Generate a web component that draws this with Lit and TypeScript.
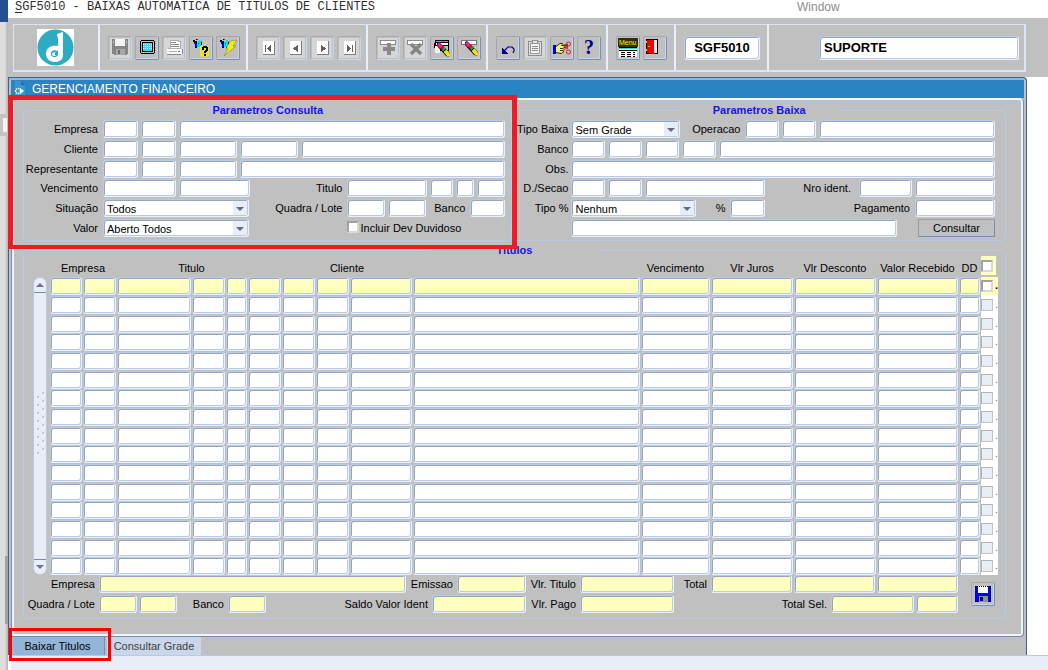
import { LitElement, html, css, svg, nothing } from "lit";
import { customElement } from "lit/decorators.js";

/* Toolbar artwork, each drawn on a 20 x 20 grid. */
const torch = svg`
  <path d="M2 2l2 0 0 1 2 0 0 1 2 0 0 5-4 0 0-3-1 0 0-2-1 0z" fill="#0000c8"/>
  <path d="M6 4l3-2 2 2-2 5-3 0z" fill="#00e0f0"/>
  <path d="M2 2h2v1h-2zM4 4h2v1h-2zM5 1h1v1h-1zM8 9h2v1h-2zM4 9h2v1h-2zM10 4h1v3h-1z" fill="#000"/>
  <path d="M6 1h1v1h-1zM7 5h1v1h-1z" fill="#e01010"/>`;
const pencil = (x: number, y: number) => svg`
  <g transform="translate(${x} ${y})" shape-rendering="auto">
    <path d="M0 1L2 0 13 11 13 15 9 14 0 4z" fill="#000"/>
    <path d="M.5 1.500L2.500 .5 6 4 3.500 6.500 .5 4z" fill="#f0208c"/>
    <path d="M3.500 6L6 4 8.500 6.500 6 9z" fill="#e01010"/>
    <path d="M5.500 8.500L8.500 6" stroke="#00b030" stroke-width="2"/>
    <path d="M6.500 10L9.500 7.500 13 11.500 13 15 10 14z" fill="#f0e020"/>
  </g>`;
const navBox = svg`
  <rect x="5" y="3" width="12" height="14" fill="#fff"/>
  <path d="M5 16.500h12M16.500 3v14" stroke="#808080"/>`;

const icons: Record<string, unknown> = {
  save: svg`
    <path d="M2 1h16v15h-1v1H4v-1H2z" fill="#868686"/>
    <path d="M5 1h10v7H5z" fill="#f4f4f4"/>
    <path d="M3 3h1v2H3zM16 3h1v2h-1z" fill="#c0c0c0"/>
    <path d="M6 11h9v6H6z" fill="#a8a8a8"/><path d="M8 12h2v4H8z" fill="#6c6c6c"/>`,
  screen: svg`
    <path d="M4 2h13v1h1v12h-1v1H4v-1H3V3h1z" fill="#000"/>
    <path d="M4 3h13v12H4z" fill="#c0c0c0"/><path d="M5 4h11v10H5z" fill="#000"/>
    <path d="M6 5h9v8H6z" fill="#20e8e8"/>
    <path d="M6 6.500h9M6 8.500h9M6 10.500h9" stroke="#b8ffff" stroke-dasharray="1 1"/>`,
  print: svg`
    <path d="M6 2h8v1h2v7H6z" fill="#fff" stroke="#b0b0b0" stroke-width="1"/>
    <path d="M7 4.500h5M7 6.500h8M7 8.500h8" stroke="#8a8a8a"/>
    <path d="M3 11h15v5H3z" fill="#fafafa"/>
    <path d="M3 16.500h14M18 11v5" stroke="#888"/><path d="M5 13.500h8M4 10.500h13" stroke="#b0b0b0"/>
    <path d="M14 13h2v1h-2z" fill="#777"/>`,
  query: svg`${torch}
    <path d="M9 8h9v11H9z" fill="#f0e820"/>
    <path d="M8 9.500h11M8 12.500h11M8 15.500h11M9 18.500h9" stroke="#c8c080" stroke-dasharray="1 1"/>
    <path d="M11 9h1V8h4v1h1v4h-1v1h-1v1h-2v-2h1v-1h1v-2h-2v2h-2zM13 16h2v2h-2z" fill="#000"/>`,
  run: svg`${torch}
    <path d="M12 3L19 2 15 8H18L6 18 10 11H8z" fill="#f8f000" stroke="#606000" stroke-width=".4" shape-rendering="auto"/>`,
  first: svg`${navBox}<path d="M7 7h1v7H7zM13 7v7L9 10.500z" fill="#606060"/>`,
  prev: svg`${navBox}<path d="M13 7v7L8 10.500z" fill="#606060"/>`,
  next: svg`${navBox}<path d="M9 7v7l5-3.500z" fill="#606060"/>`,
  last: svg`${navBox}<path d="M8 7v7l4-3.500zM13 7h1v7h-1z" fill="#606060"/>`,
  add: svg`
    <path d="M2.500 2.500h15v4h-15z" fill="#fff" stroke="#8a8a8a"/>
    <path d="M9 5h4v4h4v4h-4v4H9v-4H5V9h4z" fill="#8a8a8a"/>`,
  remove: svg`
    <path d="M2.500 2.500h15v4h-15z" fill="#fff" stroke="#8a8a8a"/>
    <path d="M6 6L16 16M16 6L6 16" stroke="#868686" stroke-width="3.500" shape-rendering="auto"/>`,
  cancelQuery: svg`
    <path d="M3 2h14v11H7v-3H2V5h1z" fill="#000"/>
    <path d="M4 3h12v1H4z" fill="#30c8c8"/><path d="M4 5h12v2H4z" fill="#fff"/>
    <path d="M3 8h5v7H3z" fill="#f4f4f4"/><path d="M9 8h7v4H9z" fill="#c0c0c0"/>${pencil(5, 4)}`,
  clear: svg`<path d="M2.500 2.500h15v4h-15z" fill="#fff" stroke="#777"/>${pencil(6, 3)}`,
  undo: svg`
    <path d="M6 13L10 9H14L16 11V13L15 15" fill="none" stroke="#000088" stroke-width="1.200" shape-rendering="auto"/>
    <path d="M4 10v6h6z" fill="#000088"/>`,
  paste: svg`
    <path d="M3.500 3.500h13v14h-13z" fill="#e0e0e0" stroke="#8c8c8c"/>
    <path d="M5.500 5.500h9v10h-9z" fill="#f4f4f4" stroke="#9a9a9a"/>
    <path d="M7 2h6v4H7z" fill="#909090"/><path d="M8 3h4v2H8z" fill="#e8e8e8"/>
    <path d="M7 8.500h6M7 10.500h6M7 12.500h6" stroke="#8c8c8c"/>`,
  cut: svg`
    <path d="M1 7h3v9H1z" fill="#0000d8"/>
    <path d="M4 8l4-3 3 0-1 2 6-1 0 3-4 1 0 4-3 2-5-1z" fill="#303000" shape-rendering="auto"/>
    <path d="M4 9l4-3 2 0-1 2 5 0 2-1 0 1-5 1 1 1-1 1 1 1-1 1 0 1-2 1-5-1z" fill="#f4f070" shape-rendering="auto"/>
    <path d="M8 10.500h3M8 12.500h3" stroke="#303000"/>
    <path d="M12 12l4-3M12 8l4 3" stroke="#e02020" shape-rendering="auto"/>
    <g fill="none" stroke="#e02020" shape-rendering="auto"><circle cx="16.500" cy="6" r="2"/><circle cx="16.500" cy="14" r="2"/></g>`,
  help: svg`<text x="10" y="16" text-anchor="middle" font-family="Liberation Serif, serif" font-weight="700" font-size="20" fill="#000088">?</text>`,
  menu: svg`
    <path d="M0 0h20v9H0z" fill="#303000"/>
    <text x="1" y="7" font-family="Liberation Sans, sans-serif" font-size="7" fill="#fff000">Menu</text>
    <path d="M1 10h18v9H1z" fill="#fff"/><path d="M1 9.500h18M1 12.500h18" stroke="#000"/><path d="M1 10.500h18" stroke="#30d8d8"/>
    <path d="M3 14.500h14M3 16.500h14M3 18.500h14" stroke="#000" stroke-dasharray="4 2"/>`,
  exit: svg`
    <path d="M1 1h12v15H1z" fill="#000"/><path d="M8 2h4v13H8z" fill="#e8e8e8"/>
    <path d="M2 2h6l1 1v13l-2 0-1-1H2z" fill="#f00000"/><path d="M3 8h2v1H3z" fill="#f8d020"/>
    <path d="M1 3h1v2H1zM1 11h1v2H1z" fill="#f8d020"/>`,
  disk: svg`
    <path d="M2 2h16v16H2z" fill="#0000f0"/><path d="M5 2h10v7H5z" fill="#fff"/>
    <path d="M2 2.500h16M2 17.500h16" stroke="#000" stroke-dasharray="1 1"/>
    <path d="M6 12h9v6H6z" fill="#909090"/><path d="M7 13h3v4H7z" fill="#0000c0"/>
    <path d="M17.500 3v14" stroke="#000060"/>`,
};

const icon = (name: string) =>
  html`<svg class="icon" viewBox="0 0 20 20" shape-rendering="crispEdges" aria-hidden="true">${icons[name]}</svg>`;

type Tool = [icon: string, title: string, disabled?: boolean];
const toolGroups: Tool[][] = [
  [["save", "Salvar", true], ["screen", "Tela"], ["print", "Imprimir", true], ["query", "Entrar consulta"], ["run", "Executar consulta"]],
  [["first", "Primeiro", true], ["prev", "Anterior", true], ["next", "Proximo", true], ["last", "Ultimo", true]],
  [["add", "Inserir", true], ["remove", "Excluir", true], ["cancelQuery", "Cancelar consulta"], ["clear", "Limpar"]],
  [["undo", "Desfazer"], ["paste", "Colar", true], ["cut", "Recortar"], ["help", "Ajuda"]],
  [["menu", "Menu"], ["exit", "Sair"]],
];

const columns = [
  "Empresa", "Nome empresa", "Titulo", "Serie", "Parcela", "Tipo", "Cliente", "Filial", "Codigo",
  "Nome cliente", "Vencimento", "Vlr Juros", "Vlr Desconto", "Valor Recebido", "DD",
];
const rowIndexes = Array.from({ length: 16 }, (_, i) => i);

const field = (name: string, width: string, id?: string) =>
  html`<input class="field ${width}" type="text" id=${id ?? nothing} aria-label=${id ? nothing : name} />`;
const combo = (id: string, width: string, value: string) =>
  html`<span class="combo ${width}"><select class="field" id=${id}><option>${value}</option></select></span>`;

@customElement("app-root")
export class AppRoot extends LitElement {
  static styles = css`
    :host {
      --face: #c0c0c0;
      --edge: #b8cbe4;
      --pale: #e8edf6;
      --steel: #6f8fb5;
      --key: #ffffc0;
      display: grid;
      grid-template-columns: 8px minmax(0, 1fr);
      min-height: 100vh;
      background: #fff;
      color: #000;
      font: 11px/14px "Liberation Sans", Arial, sans-serif;
    }
    * { box-sizing: border-box; }
    input, select, button { font: inherit; color: inherit; margin: 0; }

    .desktop {
      display: flex;
      flex-direction: column;
      background: linear-gradient(to right, #dedede 60%, #b4b4b4);
    }
    .desktop-top { height: 22px; background: #25508f; }
    .desktop-box { height: 22px; margin-top: 92px; border: solid #c4c4c4; border-width: 4px 1px 4px 3px; background: #f4f4f4; }
    .desktop-thumb { height: 68px; width: 3px; margin: 420px 0 0 5px; background: #a2a2a2; }

    .app { display: flex; flex-direction: column; min-width: 0; }
    .menubar {
      display: flex;
      height: 18px;
      align-items: flex-start;
      padding-left: 7px;
      font: 12px/14px "Liberation Mono", "Courier New", monospace;
      color: #303030;
    }
    .menubar u { text-underline-offset: 2px; }
    .menubar-title { flex: 1 1 auto; margin: 0; font: inherit; }
    .menubar-item { width: 251px; color: #8e8e8e; font: 12px/14px "Liberation Sans", Arial, sans-serif; text-decoration: none; }

    .toolband { padding: 6px 22px 5px 5px; background: var(--face); }
    .toolbar { display: flex; height: 48px; border: 2px solid #dbe5f3; border-width: 1px 2px 2px 1px; }
    .group { display: flex; align-items: center; gap: 3px; padding: 0 8px; border: 0 solid; border-right-width: 2px; border-image: linear-gradient(to right, #b8cbe4 50%, #e8f0fb 50%) 1; }
    .group-brand { width: 86px; padding: 0 0 0 23px; }
    .group-5 { width: 148px; }
    .group-4 { width: 120px; }
    .group-2 { width: 68px; }
    .group-code { width: 93px; }
    .group-user { flex: 1; justify-content: flex-end; padding-right: 5px; border: 0; }
    .logo { width: 37px; height: 37px; background: #fff; }
    .tool {
      width: 24px; height: 24px; padding: 1px;
      border: 1px solid;
      border-color: #a4a8ae #7590b4 #7590b4 #a4a8ae;
      border-radius: 2px;
      background: var(--face);
      box-shadow: inset -1px -1px 0 #c6d4e6;
    }
    .tool:disabled { border-color: #a8acb2 #c6d6ec #c6d6ec #a8acb2; box-shadow: none; }
    .tool:disabled .icon { background: #d6d6d6; }
    .icon { display: block; width: 20px; height: 20px; overflow: visible; }
    .field.big { height: 24px; padding: 0 4px; font-size: 13px; font-weight: 700; }
    .code { width: 76px; text-align: center; }
    .user { width: 200px; }

    .frame {
      margin-right: 21px;
      padding: 2px 2px 0;
      border: 1px solid #3f6290;
      border-bottom: 0;
      border-top-right-radius: 4px;
      background: linear-gradient(#8fb6de 2px, var(--face) 2px);
    }
    .titlebar { display: flex; align-items: center; height: 18px; gap: 6px; padding-left: 3px; background: #2b83c3; color: #fff; }
    .titlebar h1 { margin: 0; font: 12px/16px "Liberation Sans", Arial, sans-serif; }
    .doc { width: 12px; height: 16px; }
    .panel {
      padding: 6px 17px 17px 11px;
      border: solid var(--steel);
      border-width: 0 1px 1px;
      border-radius: 0 4px 4px 0;
      box-shadow: inset 0 0 0 2px #f0f3f9;
    }
    .params { display: grid; grid-template-columns: minmax(0, 489fr) minmax(0, 493fr); }
    fieldset { min-width: 0; margin: 0; padding: 0; border: 1px solid var(--edge); border-radius: 5px; }
    legend { margin: 0 auto; padding: 0 32px; line-height: 12px; font-weight: 700; color: #1414f0; }
    .titles { margin-top: 3px; }
    .titles legend { padding: 0 68px; }
    .rows { display: grid; grid-template-rows: 20px 20px 19px 20px 20px 19px; padding: 4px 6px 2px 0; }
    .rows-b { padding-right: 10px; }
    .titles-body { padding: 0 7px 5px 9px; }
    .row { display: flex; gap: 3px; align-items: flex-start; min-width: 0; }
    .row label { flex: none; line-height: 18px; padding-right: 2px; text-align: right; white-space: nowrap; }
    .row .lead { width: 76px; }
    .row .lead-b { width: 55px; padding-right: 0; }
    .row .fill { flex: 1 1 0; }
    .row .l62 { width: 59px; }
    .row .l45 { width: 28px; }
    .row .check-label { padding: 0; }

    .field {
      flex: none;
      min-width: 0;
      height: 18px;
      padding: 0 3px;
      border: 1px solid;
      border-color: var(--edge) #eaf1fb #eaf1fb var(--edge);
      border-radius: 3px;
      background: #fff;
      box-shadow: inset 1px 1px 0 #9aa5b5, inset -1px -1px 0 var(--edge);
      outline: none;
    }
    .grow { flex: 1 1 0; }
    .w18 { width: 18px; } .w23 { width: 23px; } .w28 { width: 28px; } .w34 { width: 34px; }
    .w35 { width: 35px; } .w38 { width: 38px; } .w42 { width: 42px; } .w53 { width: 53px; }
    .w58 { width: 58px; } .w69 { width: 69px; } .w71 { width: 71px; } .w73 { width: 73px; }
    .w80 { width: 80px; } .w81 { width: 81px; } .w83 { width: 83px; } .w94 { width: 94px; } .w109 { width: 109px; }
    .w120 { width: 120px; } .w125 { width: 125px; } .w146 { width: 146px; }
    .cluster { display: flex; gap: 3px; width: 158px; flex: none; }
    .cluster-check { gap: 1px; }
    .gap-wide { width: 15px; flex: none; }

    .combo { position: relative; display: block; flex: none; }
    .combo select { display: block; width: 100%; appearance: none; padding: 2px 16px 0 3px; }
    .combo::before {
      content: ""; position: absolute; inset: 2px 2px 2px auto; width: 14px;
      background: var(--pale); pointer-events: none;
    }
    .combo::after {
      content: ""; position: absolute; right: 5px; top: 8px; pointer-events: none;
      border: 4px solid transparent; border-top-color: #5f6b85; border-bottom: 0;
    }
    .check {
      appearance: none; flex: none; width: 12px; height: 12px;
      border: 2px solid; border-color: #a2a2a2 #d8d8d8 #d8d8d8 #a2a2a2;
      background: #fff;
    }
    .cluster-check .check { margin-top: 2px; }
    .check:disabled { background: var(--pale); border-color: #b4b4b4 #c4c4c4 #c4c4c4 #b4b4b4; border-width: 1px; }
    .command {
      flex: none; width: 77px; height: 18px; padding: 0;
      border: 1px solid; border-color: #9a9a9a var(--steel) var(--steel) #9a9a9a;
      background: var(--face);
    }

    .grid { display: flex; gap: 3px; }
    .scroll {
      display: flex; flex-direction: column; flex: none;
      width: 14px; margin-top: 21px;
      border: 1px solid var(--edge); border-radius: 7px;
      background: var(--pale);
      overflow: hidden;
    }
    .scroll button { height: 15px; padding: 0; border: 0; background: var(--pale); display: grid; place-items: center; }
    .scroll .up { border-bottom: 1px solid var(--steel); }
    .scroll .down { border-top: 1px solid var(--steel); }
    .scroll .arrow { display: block; border: 4px solid transparent; border-bottom-color: #6a7690; border-top: 0; }
    .scroll .down .arrow { border: 4px solid transparent; border-top-color: #6a7690; border-bottom: 0; }
    .track { flex: 1; display: grid; place-items: center; }
    .grip { width: 8px; height: 68px; }

    table { flex: 1; width: 100%; table-layout: fixed; border-collapse: collapse; }
    th, td { padding: 0; vertical-align: top; }
    th { height: 21px; padding: 5px 1px 0 0; font-weight: 400; line-height: 14px; white-space: nowrap; }
    th.shift { padding-right: 16px; }
    td { height: 19px; padding-right: 1px; }
    tr:nth-child(3n) td, tbody tr:last-child td { height: 18px; }
    td .field { display: block; width: 100%; height: 18px; }
    .current .field { background: var(--key); }
    .c22 { width: 22px; } .c33 { width: 33px; } .c34 { width: 34px; } .c63 { width: 63px; }
    .c70 { width: 70px; } .c75 { width: 75px; } .c82 { width: 82px; } .c83 { width: 83px; } .c17 { width: 17px; }
    td.pick, th.pick { padding: 0; background: #fff; }
    .pick div { display: flex; align-items: center; gap: 2px; height: 17px; line-height: 17px; overflow: hidden; color: #707070; }
    th.pick { background: none; }
    th.pick div { width: 15px; height: 19px; background: var(--key); }
    tr.current td.pick { background: linear-gradient(var(--key) 18px, #fff 18px); }
    tr.current .pick div { color: #000; font-weight: 700; }

    .foot { display: grid; grid-template-columns: minmax(0, 1fr) 24px; column-gap: 13px; align-items: center; margin-left: -7px; padding-right: 3px; }
    .foot-rows { display: grid; row-gap: 2px; }
    .foot .row { gap: 2px; }
    .foot .field { background: var(--key); }
    .foot .first { width: 71px; }
    .foot .l50 { width: 50px; }
    .foot .l33 { width: 33px; }
    .foot .l47 { width: 47px; }
    .foot .l153 { width: 153px; }

    .tabs { display: flex; gap: 2px; height: 18px; }
    .tab { width: 94px; padding: 0; border: 0; background: #cad6ea; color: #404040; line-height: 18px; }
    .tab[aria-selected="true"] { background: #93b5d7; color: #000; border-right: 1px solid var(--steel); }
    .status { flex: 1; min-height: 14px; margin-left: 3px; border-top: 1px solid var(--edge); background: var(--pale); }

    .stage { position: relative; }
    .mark { position: absolute; pointer-events: none; }
    .mark-params { left: 0; top: 18px; width: 509px; height: 154px; border: 5px solid #ed1c24; border-bottom-width: 4px; }
    .mark-tab { left: 1px; bottom: -6px; width: 102px; height: 33px; border: 3px solid #ff0000; }
  `;

  private renderToolbar() {
    return html`
      <div class="toolband">
        <div class="toolbar" role="toolbar">
          <div class="group group-brand">
            <svg class="logo" viewBox="0 0 37 37" aria-hidden="true">
              <circle cx="18.5" cy="18.500" r="18" fill="#2cabc1" />
              <path d="M20 5L26 3V26C26 31 22 33 18 33C12 33 9 29 9 25C9 18 15 16 21 17V10C21 8 20 7 20 5Z" fill="#fff" />
              <path d="M21 22C16 20 13 23 14 26C15 29 21 29 21 25Z" fill="#2cabc1" />
              <path d="M15 25C16 22 20 23 19 26C18 28 15 27 15 25Z" fill="#fff" />
              <path d="M18 24h3v2h-3z" fill="#2cabc1" />
            </svg>
          </div>
          ${toolGroups.map(
            (group) => html`<div class="group group-${group.length}">
              ${group.map(
                ([name, title, disabled]) =>
                  html`<button class="tool" type="button" title=${title} aria-label=${title} ?disabled=${disabled}>${icon(name)}</button>`
              )}
            </div>`
          )}
          <div class="group group-code"><input class="field big code" type="text" aria-label="Programa" value="SGF5010" /></div>
          <div class="group group-user"><input class="field big user" type="text" aria-label="Usuario" value="SUPORTE" /></div>
        </div>
      </div>
    `;
  }

  private renderQuery() {
    return html`
      <fieldset>
        <legend>Parametros Consulta</legend>
        <div class="rows">
          <div class="row">
            <label class="lead" for="q-emp">Empresa</label>
            ${field("", "w35", "q-emp")}${field("Filial", "w35")}${field("Nome da empresa", "grow")}
          </div>
          <div class="row">
            <label class="lead" for="q-cli">Cliente</label>
            ${field("", "w35", "q-cli")}${field("Filial cliente", "w35")}${field("Codigo cliente", "w58")}${field("Loja cliente", "w58")}${field("Nome do cliente", "grow")}
          </div>
          <div class="row">
            <label class="lead" for="q-rep">Representante</label>
            ${field("", "w35", "q-rep")}${field("Filial representante", "w35")}${field("Codigo representante", "w58")}${field("Nome do representante", "grow")}
          </div>
          <div class="row">
            <label class="lead" for="q-ven">Vencimento</label>
            ${field("", "w73", "q-ven")}${field("Vencimento final", "w71")}
            <label class="fill" for="q-tit">Titulo</label>
            <div class="cluster">${field("", "w80", "q-tit")}${field("Serie", "w23")}${field("Parcela", "w18")}${field("Tipo", "w28")}</div>
          </div>
          <div class="row">
            <label class="lead" for="q-sit">Situação</label>
            ${combo("q-sit", "w146", "Todos")}
            <label class="fill" for="q-qua">Quadra / Lote</label>
            <div class="cluster">
              ${field("", "w38", "q-qua")}${field("Lote", "w38")}
              <label class="fill" for="q-ban">Banco</label>
              ${field("", "w35", "q-ban")}
            </div>
          </div>
          <div class="row">
            <label class="lead" for="q-val">Valor</label>
            ${combo("q-val", "w146", "Aberto Todos")}
            <span class="grow"></span>
            <div class="cluster cluster-check">
              <input class="check" type="checkbox" id="q-dev" />
              <label class="check-label" for="q-dev">Incluir Dev Duvidoso</label>
            </div>
          </div>
        </div>
      </fieldset>
    `;
  }

  private renderSettlement() {
    return html`
      <fieldset>
        <legend>Parametros Baixa</legend>
        <div class="rows rows-b">
          <div class="row">
            <label class="lead-b" for="b-tipo">Tipo Baixa</label>
            ${combo("b-tipo", "w109", "Sem Grade")}
            <label class="l62" for="b-ope">Operacao</label>
            ${field("", "w34", "b-ope")}${field("Codigo operacao", "w34")}${field("Nome operacao", "grow")}
          </div>
          <div class="row">
            <label class="lead-b" for="b-ban">Banco</label>
            ${field("", "w34", "b-ban")}${field("Agencia", "w34")}${field("Conta", "w34")}${field("Carteira", "w34")}${field("Nome do banco", "grow")}
          </div>
          <div class="row">
            <label class="lead-b" for="b-obs">Obs.</label>
            ${field("", "grow", "b-obs")}
          </div>
          <div class="row">
            <label class="lead-b" for="b-sec">D./Secao</label>
            ${field("", "w34", "b-sec")}${field("Secao", "w34")}${field("Nome da secao", "w120")}
            <label class="fill" for="b-nro">Nro ident.</label>
            <span></span>${field("", "w53", "b-nro")}${field("Identificacao", "w80")}
          </div>
          <div class="row">
            <label class="lead-b" for="b-tpp">Tipo %</label>
            ${combo("b-tpp", "w125", "Nenhum")}
            <label class="l45" for="b-per">%</label>
            ${field("", "w35", "b-per")}
            <label class="fill" for="b-pag">Pagamento</label>
            ${field("", "w80", "b-pag")}
          </div>
          <div class="row">
            <span class="lead-b"></span>
            ${field("Mensagem", "grow")}
            <span class="gap-wide"></span>
            <button class="command" type="button">Consultar</button>
          </div>
        </div>
      </fieldset>
    `;
  }

  private renderTable() {
    return html`
      <div class="grid">
        <div class="scroll">
          <button class="up" type="button" aria-label="Subir"><span class="arrow"></span></button>
          <div class="track">
            <svg class="grip" viewBox="0 0 8 68" shape-rendering="crispEdges" aria-hidden="true">
              ${Array.from({ length: 8 }, (_, i) => svg`
                <path d="M0 ${i * 8 + 5}h1v1h-1zM5 ${i * 8 + 1}h1v1h-1z" fill="#fff"/>
                <path d="M1 ${i * 8 + 5}h1v-1h1v1h-1v1h-1zM6 ${i * 8 + 1}h1v-1h1v1h-1v1h-1z" fill="#98aed0"/>`)}
            </svg>
          </div>
          <button class="down" type="button" aria-label="Descer"><span class="arrow"></span></button>
        </div>
        <table>
          <colgroup>
            <col class="c33" /><col class="c34" /><col class="c75" /><col class="c34" /><col class="c22" />
            <col class="c34" /><col class="c34" /><col class="c34" /><col class="c63" /><col />
            <col class="c70" /><col class="c83" /><col class="c83" /><col class="c82" /><col class="c22" /><col class="c17" />
          </colgroup>
          <thead>
            <tr>
              <th colspan="2">Empresa</th>
              <th class="shift" colspan="4">Titulo</th>
              <th colspan="3">Cliente</th>
              <th></th>
              <th>Vencimento</th>
              <th>Vlr Juros</th>
              <th>Vlr Desconto</th>
              <th>Valor Recebido</th>
              <th>DD</th>
              <th class="pick"><div><input class="check" type="checkbox" aria-label="Selecionar todos" /></div></th>
            </tr>
          </thead>
          <tbody>
            ${rowIndexes.map(
              (row) => html`<tr class=${row === 0 ? "current" : ""}>
                ${columns.map((name) => html`<td><input class="field" type="text" aria-label="${name} ${row + 1}" /></td>`)}
                <td class="pick">
                  <div><input class="check" type="checkbox" aria-label="Selecionar ${row + 1}" ?disabled=${row > 0} /><span>.</span></div>
                </td>
              </tr>`
            )}
          </tbody>
        </table>
      </div>
    `;
  }

  private renderFooter() {
    return html`
      <div class="foot">
        <div class="foot-rows">
          <div class="row">
            <label class="first" for="f-emp">Empresa</label>
            ${field("", "grow", "f-emp")}
            <label class="l47" for="f-emi">Emissao</label>
            ${field("", "w69", "f-emi")}
            <label class="l50" for="f-tit">Vlr. Titulo</label>
            ${field("", "w94", "f-tit")}
            <label class="l33" for="f-tot">Total</label>
            ${field("", "w81", "f-tot")}${field("Total desconto", "w81")}${field("Total recebido", "w81")}
          </div>
          <div class="row">
            <label class="first" for="f-qua">Quadra / Lote</label>
            ${field("", "w38", "f-qua")}${field("Lote do titulo", "w38")}
            <label class="l47" for="f-ban">Banco</label>
            ${field("", "w38", "f-ban")}
            <label class="fill" for="f-sal">Saldo Valor Ident</label>
            ${field("", "w94", "f-sal")}
            <label class="l50" for="f-pag">Vlr. Pago</label>
            ${field("", "w94", "f-pag")}
            <label class="l153" for="f-sel">Total Sel.</label>
            ${field("", "w83", "f-sel")}${field("Quantidade selecionada", "w42")}
          </div>
        </div>
        <button class="tool" type="button" title="Gravar" aria-label="Gravar">${icon("disk")}</button>
      </div>
    `;
  }

  render() {
    return html`
      <aside class="desktop" aria-hidden="true">
        <div class="desktop-top"></div>
        <div class="desktop-box"></div>
        <div class="desktop-thumb"></div>
      </aside>
      <main class="app">
        <header class="menubar">
          <h2 class="menubar-title"><u>S</u>GF5010 - BAIXAS AUTOMATICA DE TITULOS DE CLIENTES</h2>
          <a class="menubar-item" href="#window">Window</a>
        </header>
        ${this.renderToolbar()}
        <div class="stage">
          <section class="frame">
            <div class="titlebar">
              <svg class="doc" viewBox="0 0 12 16" aria-hidden="true">
                <path d="M1 0H7L11 4V15H1Z" fill="#3f93cf" /><path d="M7 0V4H11Z" fill="#1f6aa8" />
                <circle cx="4" cy="10" r="2.500" fill="none" stroke="#fff" stroke-width="1.500" stroke-dasharray="1.500 .8" />
                <path d="M6 7L10 10 6 13Z" fill="#fff" />
              </svg>
              <h1>GERENCIAMENTO FINANCEIRO</h1>
            </div>
            <div class="panel">
              <div class="params">${this.renderQuery()}${this.renderSettlement()}</div>
              <fieldset class="titles">
                <legend>Titulos</legend>
                <div class="titles-body">${this.renderTable()}${this.renderFooter()}</div>
              </fieldset>
            </div>
            <div class="tabs" role="tablist">
              <button class="tab" type="button" role="tab" aria-selected="true">Baixar Titulos</button>
              <button class="tab" type="button" role="tab" aria-selected="false">Consultar Grade</button>
            </div>
          </section>
          <div class="mark mark-params"></div>
          <div class="mark mark-tab"></div>
        </div>
        <div class="status"></div>
      </main>
    `;
  }
}
